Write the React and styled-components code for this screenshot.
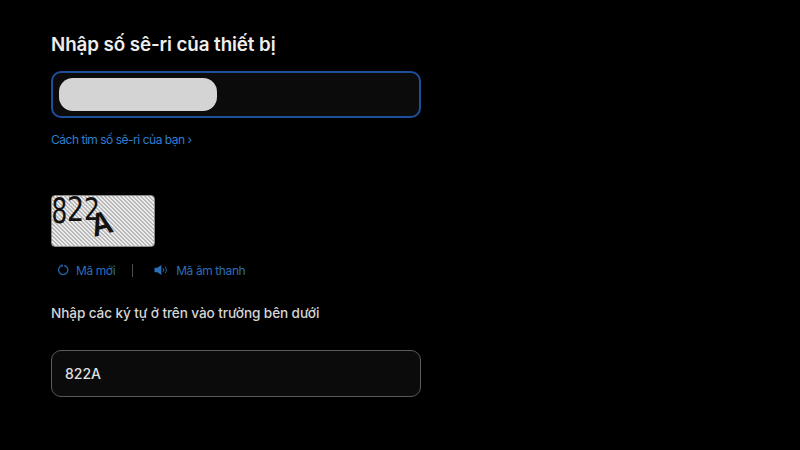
import React from 'react';
import styled, { createGlobalStyle } from 'styled-components';

const GlobalStyle = createGlobalStyle`
  html, body {
    margin: 0;
    height: 100%;
    background: #000;
  }
  body {
    font-family: Inter, "Noto Sans", "Liberation Sans", sans-serif;
    -webkit-font-smoothing: antialiased;
  }
`;

const Page = styled.main`
  display: flex;
  flex-direction: column;
  box-sizing: border-box;
  width: 800px;
  height: 450px;
  padding: 33px 0 0 51px;
  overflow: hidden;
  background: #000;
`;

const Title = styled.h1`
  margin: 0 0 15px;
  font-size: 18.8px;
  line-height: 23px;
  font-weight: 600;
  letter-spacing: -0.1px;
  color: #eeeeee;
`;

const Field = styled.div`
  display: flex;
  align-items: center;
  box-sizing: border-box;
  width: 370px;
  height: 47px;
  padding: 0 ${p => (p.$focused ? '6px' : '13px')};
  border-radius: 10px;
  background: #0b0b0c;
  border: ${p => (p.$focused ? '2px solid #1d4f9c' : '1px solid #5a5a5c')};
  font-size: 14px;
  font-weight: 500;
  color: #e0e0e0;
`;

const Redaction = styled.div`
  width: 158px;
  height: 33px;
  border-radius: 14px;
  background: #d4d4d4;
`;

const HelpLink = styled.a`
  margin-top: 14px;
  font-size: 12px;
  line-height: 16px;
  letter-spacing: -0.48px;
  color: #2f7fd0;
`;

const Captcha = styled.div`
  box-sizing: border-box;
  width: 104px;
  height: 52px;
  margin-top: 47px;
  border-radius: 4px;
  border: 1px solid #8a8a8a;
  background: repeating-linear-gradient(45deg, #ececec, #ececec 1.414px, #b8b8b8 1.414px, #b8b8b8 2.828px);
`;

const CaptchaArt = styled.svg`
  display: block;
  width: 102px;
  height: 50px;
  overflow: visible;
`;

const Actions = styled.div`
  display: flex;
  align-items: center;
  margin: 15px 0 0 6px;
  height: 16px;
`;

const Action = styled.a`
  display: flex;
  align-items: center;
  gap: ${p => p.$gap}px;
  font-size: 12px;
  letter-spacing: -0.4px;
  color: #2a6fb8;
`;

const Divider = styled.span`
  width: 1px;
  height: 13px;
  margin: 0 21px 0 17px;
  background: #4d4d4f;
`;

const Prompt = styled.p`
  margin: 26px 0 0;
  font-size: 13.6px;
  line-height: 18px;
  letter-spacing: -0.1px;
  font-weight: 500;
  color: #d6d6d6;
`;

const AnswerField = styled(Field)`
  margin-top: 28px;
`;

const App = () => (
  <Page>
    <GlobalStyle />
    <Title>Nhập số sê-ri của thiết bị</Title>
    <Field $focused>
      <Redaction />
    </Field>
    <HelpLink>Cách tìm số sê-ri của bạn ›</HelpLink>

    <Captcha>
      <CaptchaArt viewBox="0 0 102 50">
        <text fontFamily="DejaVu Sans, sans-serif" fontSize="27" fill="#111" transform="translate(-0.5 27) scale(0.92 1.3)">8</text>
        <text fontFamily="DejaVu Sans, sans-serif" fontSize="27" fill="#111" transform="translate(15 25) scale(1 1.26)">2</text>
        <text fontFamily="DejaVu Sans, sans-serif" fontSize="25" fill="#111" transform="translate(32 24) scale(1 1.26)">2</text>
        <text fontFamily="Liberation Sans, sans-serif" fontSize="31" fontWeight="700" fill="#111" transform="translate(42 41) rotate(-15) scale(0.95 1.05)">A</text>
      </CaptchaArt>
    </Captcha>

    <Actions>
      <Action $gap={7}>
        <svg width="12" height="12" viewBox="0 0 12 12" fill="none" stroke="#2163a8" strokeWidth="1.3">
          <path d="M7.2 1.5A4.6 4.6 0 1 1 5.2 1.5" />
          <path d="M4.6 0.4L6 1.5 4.6 2.7" strokeWidth="1" />
        </svg>
        Mã mới
      </Action>
      <Divider />
      <Action $gap={7}>
        <svg width="15" height="12" viewBox="0 0 15 12" fill="none">
          <path d="M0.5 3.8H3.4L7.4 1V11L3.4 8.2H0.5Z" fill="#2a6fb8" />
          <path d="M9 4.2A2.6 2.6 0 0 1 9 7.8M11 2.8A4.6 4.6 0 0 1 11 9.2" stroke="#2a6fb8" strokeWidth="0.9" />
        </svg>
        Mã âm thanh
      </Action>
    </Actions>

    <Prompt>Nhập các ký tự ở trên vào trường bên dưới</Prompt>
    <AnswerField>822A</AnswerField>
  </Page>
);

export default App;
